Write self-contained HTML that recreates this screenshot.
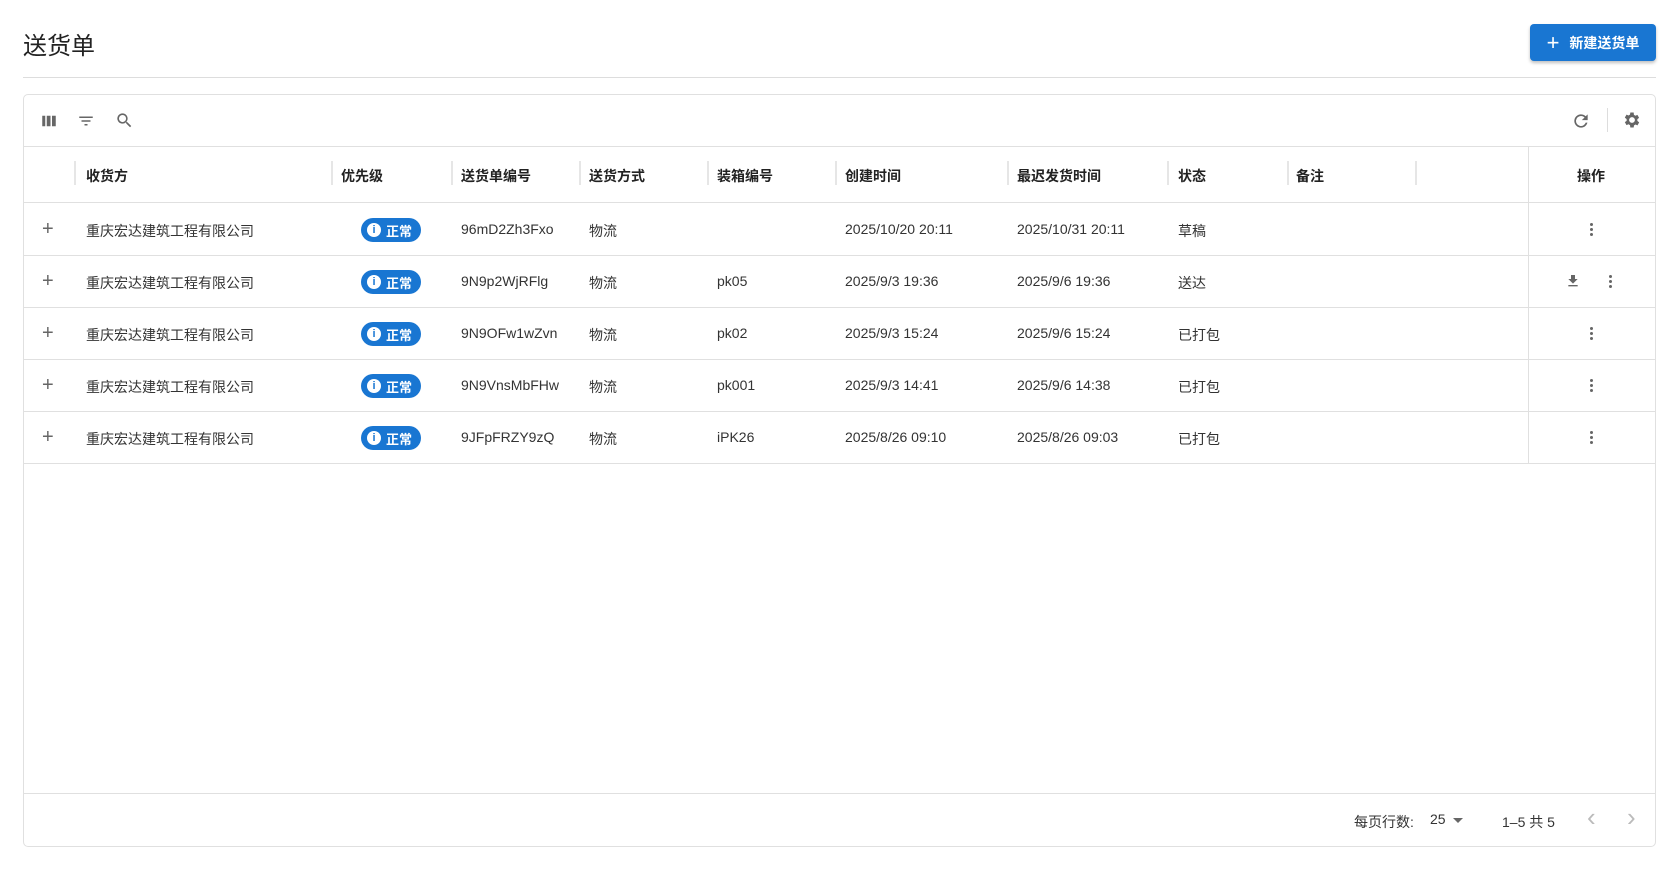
<!DOCTYPE html><html><head><meta charset="utf-8"><style>
*{box-sizing:border-box;margin:0;padding:0}
body{width:1680px;height:871px;background:#fff;font-family:"Liberation Sans","Noto Sans CJK SC",sans-serif;color:rgba(0,0,0,.87);position:relative;overflow:hidden;font-size:14px}
.a{position:absolute;white-space:nowrap}
.title{left:23px;top:26px;font-size:24px;color:#222}
.hr{left:23px;top:77px;width:1633px;height:1px;background:#ddd}
.btn{left:1530px;top:24px;width:126px;height:37px;background:#1976d2;border-radius:4px;color:#fff;font-size:14px;font-weight:bold;box-shadow:0 2px 3px rgba(0,0,0,.25);display:flex;align-items:center;justify-content:center;gap:10px}
.panel{left:23px;top:94px;width:1633px;height:753px;border:1px solid #e0e0e0;border-radius:5px}
.line{height:1px;background:#e0e0e0;left:0;width:100%}
.th{top:166px;font-weight:bold;font-size:14px;color:#222}
.div{width:2px;height:24px;background:#e6e6e6;top:161px}
.td{font-size:14px;color:#333}
.badge{width:60px;height:24px;background:#1976d2;border-radius:12px;color:#fff;font-weight:bold;font-size:13px;display:flex;align-items:center;padding-left:6px;gap:5px}
.badge i{width:14px;height:14px;border-radius:50%;background:#fff;color:#1976d2;font-style:normal;font-size:11px;font-weight:bold;display:flex;align-items:center;justify-content:center}
.plus{font-size:20px;color:#666;left:42px}
.dots{width:4px}
.dots b{display:block;width:3px;height:3px;border-radius:50%;background:#666;margin:0 0 2px}
</style></head><body>
<div class="a title">送货单</div>
<div class="a btn"><span style="font-size:22px;font-weight:normal">+</span><span>新建送货单</span></div>
<div class="a hr"></div>
<div class="a panel">
<svg class="a" style="left:16px;top:17px" width="18" height="18" viewBox="0 0 24 24"><path fill="#666" d="M3 5h4v14H3zM9 5h5v14H9zM16 5h5v14h-5z"/></svg>
<svg class="a" style="left:53px;top:17px" width="18" height="18" viewBox="0 0 24 24"><path fill="#666" d="M3 6h18v2H3zM6 11h12v2H6zM10 16h4v2h-4z"/></svg>
<svg class="a" style="left:91px;top:16px" width="19" height="19" viewBox="0 0 24 24"><path fill="#666" d="M15.5 14h-.8l-.3-.3A6.5 6.5 0 1 0 9.5 16a6.5 6.5 0 0 0 4.2-1.6l.3.3v.8l5 5 1.5-1.5zm-6 0a4.5 4.5 0 1 1 0-9 4.5 4.5 0 0 1 0 9z"/></svg>
<svg class="a" style="left:1547px;top:16px" width="20" height="20" viewBox="0 0 24 24"><path fill="#666" d="M17.65 6.35A8 8 0 1 0 19.73 14h-2.08A6 6 0 1 1 12 6c1.66 0 3.14.69 4.22 1.78L13 11h7V4z"/></svg>
<div class="a" style="left:1583px;top:13px;width:1px;height:24px;background:#ddd"></div>
<svg class="a" style="left:1598px;top:15px" width="20" height="20" viewBox="0 0 24 24"><path fill="#666" d="M19.4 13a7.5 7.5 0 0 0 0-2l2.1-1.6-2-3.5-2.5 1a7 7 0 0 0-1.7-1L15 3h-4l-.4 2.6a7 7 0 0 0-1.7 1l-2.5-1-2 3.5L6.6 11a7.5 7.5 0 0 0 0 2l-2.2 1.6 2 3.5 2.5-1c.5.4 1.1.8 1.7 1L11 21h4l.4-2.6c.6-.3 1.2-.6 1.7-1l2.5 1 2-3.5zM13 15.5a3.5 3.5 0 1 1 0-7 3.5 3.5 0 0 1 0 7z" transform="translate(-1 0)"/></svg>
<div class="a line" style="top:51px"></div>
<div class="a line" style="top:107px"></div>
<div class="a line" style="top:160px"></div>
<div class="a line" style="top:212px"></div>
<div class="a line" style="top:264px"></div>
<div class="a line" style="top:316px"></div>
<div class="a line" style="top:368px"></div>
<div class="a line" style="top:698px"></div>
<div class="a" style="left:1504px;top:51px;width:1px;height:317px;background:#e0e0e0"></div>
</div>
<div class="a div" style="left:74px"></div><div class="a th" style="left:86px">收货方</div>
<div class="a div" style="left:331px"></div><div class="a th" style="left:341px">优先级</div>
<div class="a div" style="left:451px"></div><div class="a th" style="left:461px">送货单编号</div>
<div class="a div" style="left:579px"></div><div class="a th" style="left:589px">送货方式</div>
<div class="a div" style="left:707px"></div><div class="a th" style="left:717px">装箱编号</div>
<div class="a div" style="left:835px"></div><div class="a th" style="left:845px">创建时间</div>
<div class="a div" style="left:1007px"></div><div class="a th" style="left:1017px">最迟发货时间</div>
<div class="a div" style="left:1167px"></div><div class="a th" style="left:1178px">状态</div>
<div class="a div" style="left:1287px"></div><div class="a th" style="left:1296px">备注</div>
<div class="a div" style="left:1415px"></div>
<div class="a th" style="left:1577px">操作</div>

<div style="position:absolute;left:0;top:221px">
<div class="a plus" style="top:-3px">+</div><div class="a td" style="left:86px">重庆宏达建筑工程有限公司</div><div class="a badge" style="left:361px;top:-3px"><i>i</i>正常</div><div class="a td" style="left:461px">96mD2Zh3Fxo</div><div class="a td" style="left:589px">物流</div><div class="a td" style="left:717px"></div><div class="a td" style="left:845px">2025/10/20 20:11</div><div class="a td" style="left:1017px">2025/10/31 20:11</div><div class="a td" style="left:1178px">草稿</div><div class="a dots" style="left:1590px;top:2px"><b></b><b></b><b></b></div>
</div>
<div style="position:absolute;left:0;top:273px">
<div class="a plus" style="top:-3px">+</div><div class="a td" style="left:86px">重庆宏达建筑工程有限公司</div><div class="a badge" style="left:361px;top:-3px"><i>i</i>正常</div><div class="a td" style="left:461px">9N9p2WjRFlg</div><div class="a td" style="left:589px">物流</div><div class="a td" style="left:717px">pk05</div><div class="a td" style="left:845px">2025/9/3 19:36</div><div class="a td" style="left:1017px">2025/9/6 19:36</div><div class="a td" style="left:1178px">送达</div>
<svg class="a" style="left:1565px;top:0px" width="16" height="16" viewBox="0 0 24 24"><path fill="#666" d="M19 9h-4V3H9v6H5l7 7zM5 18v2h14v-2z"/></svg>
<div class="a dots" style="left:1609px;top:2px"><b></b><b></b><b></b></div>
</div>
<div style="position:absolute;left:0;top:325px">
<div class="a plus" style="top:-3px">+</div><div class="a td" style="left:86px">重庆宏达建筑工程有限公司</div><div class="a badge" style="left:361px;top:-3px"><i>i</i>正常</div><div class="a td" style="left:461px">9N9OFw1wZvn</div><div class="a td" style="left:589px">物流</div><div class="a td" style="left:717px">pk02</div><div class="a td" style="left:845px">2025/9/3 15:24</div><div class="a td" style="left:1017px">2025/9/6 15:24</div><div class="a td" style="left:1178px">已打包</div><div class="a dots" style="left:1590px;top:2px"><b></b><b></b><b></b></div>
</div>
<div style="position:absolute;left:0;top:377px">
<div class="a plus" style="top:-3px">+</div><div class="a td" style="left:86px">重庆宏达建筑工程有限公司</div><div class="a badge" style="left:361px;top:-3px"><i>i</i>正常</div><div class="a td" style="left:461px">9N9VnsMbFHw</div><div class="a td" style="left:589px">物流</div><div class="a td" style="left:717px">pk001</div><div class="a td" style="left:845px">2025/9/3 14:41</div><div class="a td" style="left:1017px">2025/9/6 14:38</div><div class="a td" style="left:1178px">已打包</div><div class="a dots" style="left:1590px;top:2px"><b></b><b></b><b></b></div>
</div>
<div style="position:absolute;left:0;top:429px">
<div class="a plus" style="top:-3px">+</div><div class="a td" style="left:86px">重庆宏达建筑工程有限公司</div><div class="a badge" style="left:361px;top:-3px"><i>i</i>正常</div><div class="a td" style="left:461px">9JFpFRZY9zQ</div><div class="a td" style="left:589px">物流</div><div class="a td" style="left:717px">iPK26</div><div class="a td" style="left:845px">2025/8/26 09:10</div><div class="a td" style="left:1017px">2025/8/26 09:03</div><div class="a td" style="left:1178px">已打包</div><div class="a dots" style="left:1590px;top:2px"><b></b><b></b><b></b></div>
</div>

<div class="a td" style="left:1354px;top:812px">每页行数:</div>
<div class="a td" style="left:1430px;top:811px">25</div>
<div class="a" style="left:1453px;top:818px;width:0;height:0;border-left:5px solid transparent;border-right:5px solid transparent;border-top:5px solid #666"></div>
<div class="a td" style="left:1502px;top:812px">1–5 共 5</div>
<div class="a" style="left:1587px;top:802px;color:#bbb;font-size:26px">&lsaquo;</div>
<div class="a" style="left:1627px;top:802px;color:#bbb;font-size:26px">&rsaquo;</div>
</body></html>
